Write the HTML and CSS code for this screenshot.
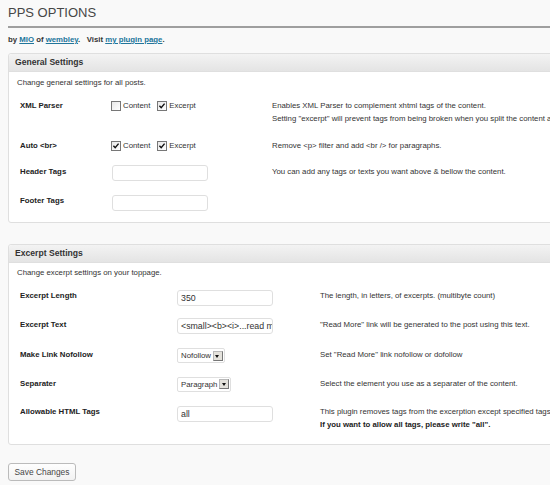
FILE: index.html
```html
<!DOCTYPE html>
<html lang="en">
<head>
<meta charset="utf-8">
<title>PPS Options</title>
<link rel="stylesheet" href="styles.css">
</head>
<body>
<div class="wrap">
  <h2 class="title">PPS OPTIONS</h2>
  <p class="byline">by <a href="#">MIO</a> of <a href="#">wembley</a>.&nbsp;&nbsp; Visit <a href="#">my plugin page</a>.</p>

  <div class="panel">
    <h3 class="panel-head">General Settings</h3>
    <div class="panel-body">
      <p class="intro">Change general settings for all posts.</p>
      <div class="rows general">
        <div class="row first">
          <div class="label">XML Parser</div>
          <div class="ctrl">
            <span class="opt"><span class="cb"></span>Content</span>
            <span class="opt"><span class="cb on"><svg viewBox="0 0 9 9"><path d="M1.6 4.2 L3.6 6.4 L7.4 1.8"/></svg></span>Excerpt</span>
          </div>
          <div class="desc">
            <p>Enables XML Parser to complement xhtml tags of the content.</p>
            <p>Setting "excerpt" will prevent tags from being broken when you split the content at the middle of a tag.</p>
          </div>
        </div>
        <div class="row">
          <div class="label">Auto &lt;br&gt;</div>
          <div class="ctrl">
            <span class="opt"><span class="cb on"><svg viewBox="0 0 9 9"><path d="M1.6 4.2 L3.6 6.4 L7.4 1.8"/></svg></span>Content</span>
            <span class="opt"><span class="cb on"><svg viewBox="0 0 9 9"><path d="M1.6 4.2 L3.6 6.4 L7.4 1.8"/></svg></span>Excerpt</span>
          </div>
          <div class="desc"><p>Remove &lt;p&gt; filter and add &lt;br /&gt; for paragraphs.</p></div>
        </div>
        <div class="row">
          <div class="label">Header Tags</div>
          <div class="ctrl"><span class="field"></span></div>
          <div class="desc"><p>You can add any tags or texts you want above &amp; bellow the content.</p></div>
        </div>
        <div class="row">
          <div class="label">Footer Tags</div>
          <div class="ctrl"><span class="field"></span></div>
          <div class="desc"></div>
        </div>
      </div>
    </div>
  </div>

  <div class="panel second">
    <h3 class="panel-head">Excerpt Settings</h3>
    <div class="panel-body">
      <p class="intro">Change excerpt settings on your toppage.</p>
      <div class="rows excerpt">
        <div class="row">
          <div class="label">Excerpt Length</div>
          <div class="ctrl"><span class="field">350</span></div>
          <div class="desc"><p>The length, in letters, of excerpts. (multibyte count)</p></div>
        </div>
        <div class="row before-sel">
          <div class="label">Excerpt Text</div>
          <div class="ctrl"><span class="field">&lt;small&gt;&lt;b&gt;&lt;i&gt;...read more</span></div>
          <div class="desc"><p>"Read More" link will be generated to the post using this text.</p></div>
        </div>
        <div class="row sel-row">
          <div class="label">Make Link Nofollow</div>
          <div class="ctrl"><span class="select">Nofollow<span class="arrow"></span></span></div>
          <div class="desc"><p>Set "Read More" link nofollow or dofollow</p></div>
        </div>
        <div class="row sel-row">
          <div class="label">Separater</div>
          <div class="ctrl"><span class="select">Paragraph<span class="arrow"></span></span></div>
          <div class="desc"><p>Select the element you use as a separater of the content.</p></div>
        </div>
        <div class="row">
          <div class="label">Allowable HTML Tags</div>
          <div class="ctrl"><span class="field">all</span></div>
          <div class="desc">
            <p>This plugin removes tags from the excerption except specified tags here.</p>
            <p class="strong">If you want to allow all tags, please write "all".</p>
          </div>
        </div>
      </div>
    </div>
  </div>

  <div class="actions"><span class="button">Save Changes</span></div>
</div>
</body>
</html>
```

FILE: styles.css
```css
html, body {
  margin: 0;
  padding: 0;
  overflow: hidden;
  background: #f9f9f9;
}
body {
  font-family: "Liberation Sans", Arial, sans-serif;
  color: #333;
}
.wrap {
  width: 780px;
  padding-left: 8px;
}
.title {
  margin: 0;
  padding: 5px 0 5px 0;
  font-size: 13px;
  line-height: 16px;
  font-weight: normal;
  color: #464646;
  border-bottom: 2px solid #9f9f9f;
}
.byline {
  margin: 6px 0 0 0;
  font-size: 7.8px;
  line-height: 12px;
  font-weight: bold;
  color: #333;
}
.byline a {
  color: #21759b;
  text-decoration: underline;
}
.panel {
  margin-top: 7px;
  border: 1px solid #dfdfdf;
  border-radius: 3px;
  background: #fff;
}
.panel.second {
  margin-top: 21px;
}
.panel-head {
  margin: 0;
  height: 17px;
  line-height: 17px;
  padding-left: 6px;
  font-size: 8.6px;
  font-weight: bold;
  color: #333;
  background: linear-gradient(to bottom, #f3f3f3, #e4e4e4);
  border-bottom: 1px solid #dfdfdf;
  border-radius: 3px 3px 0 0;
}
.panel-body {
  padding: 3.5px 8px 11px 8px;
}
.second .panel-body {
  padding-bottom: 13px;
}
.intro {
  margin: 0;
  font-size: 7.8px;
  line-height: 13px;
  color: #333;
}
.rows {
  margin: 10px 0 0 3px;
  display: flex;
  flex-direction: column;
  gap: 13px;
}
.row {
  display: grid;
  align-items: start;
}
.general .row {
  grid-template-columns: 92px 160px 1fr;
}
.general .row.first {
  padding-bottom: 1px;
}
.excerpt {
  gap: 12px;
}
.excerpt .row {
  grid-template-columns: 157px 143px 1fr;
}
.excerpt .row.before-sel {
  padding-bottom: 2px;
}
.label {
  font-size: 7.8px;
  line-height: 13px;
  font-weight: bold;
  color: #222;
}
.ctrl {
  display: flex;
  align-items: center;
  min-height: 13px;
}
.desc p {
  margin: 0;
  font-size: 7.8px;
  line-height: 13px;
  color: #333;
  white-space: nowrap;
}
.desc p.strong {
  font-weight: bold;
  color: #222;
}
.opt {
  display: inline-flex;
  align-items: center;
  font-size: 7.8px;
  line-height: 13px;
  color: #333;
  margin-right: 7px;
}
.general .row .ctrl .opt:first-child {
  margin-left: -1px;
}
.cb {
  width: 8px;
  height: 8px;
  border: 1px solid #777;
  background: linear-gradient(to bottom right, #e8e8e8, #fff);
  margin-right: 2px;
  display: inline-block;
  position: relative;
  top: 0.5px;
}
.cb svg {
  display: block;
  width: 8px;
  height: 8px;
}
.cb svg path {
  fill: none;
  stroke: #111;
  stroke-width: 1.6;
}
.field {
  display: block;
  box-sizing: border-box;
  width: 96px;
  height: 16px;
  border: 1px solid #dfdfdf;
  border-radius: 3px;
  background: #fff;
  font-size: 8.8px;
  line-height: 14px;
  padding-left: 3px;
  color: #333;
  overflow: hidden;
  white-space: nowrap;
  margin-top: 0.5px;
}
.sel-row .ctrl {
  min-height: 16.5px;
  align-items: flex-start;
}
.select {
  display: inline-flex;
  align-items: center;
  box-sizing: border-box;
  height: 15px;
  border: 1px solid #dfdfdf;
  border-radius: 2px;
  background: #fff;
  padding: 0 1px 0 3px;
  font-size: 7.8px;
  color: #333;
  gap: 2px;
}
.arrow {
  position: relative;
  display: inline-block;
  width: 10px;
  height: 10px;
  box-sizing: border-box;
  background: #e4e2dc;
  border: 1px solid #b8b8b8;
  border-right-color: #777;
  border-bottom-color: #777;
}
.arrow::after {
  content: "";
  position: absolute;
  left: 1.5px;
  top: 3px;
  border-left: 2.5px solid transparent;
  border-right: 2.5px solid transparent;
  border-top: 3px solid #111;
}
.actions {
  margin-top: 16px;
}
.button {
  display: inline-block;
  box-sizing: border-box;
  width: 68px;
  height: 18px;
  line-height: 16px;
  text-align: center;
  border: 1px solid #bbb;
  border-radius: 3px;
  background: linear-gradient(to bottom, #fefefe, #f2f2f2);
  font-size: 8.4px;
  color: #464646;
}
```
